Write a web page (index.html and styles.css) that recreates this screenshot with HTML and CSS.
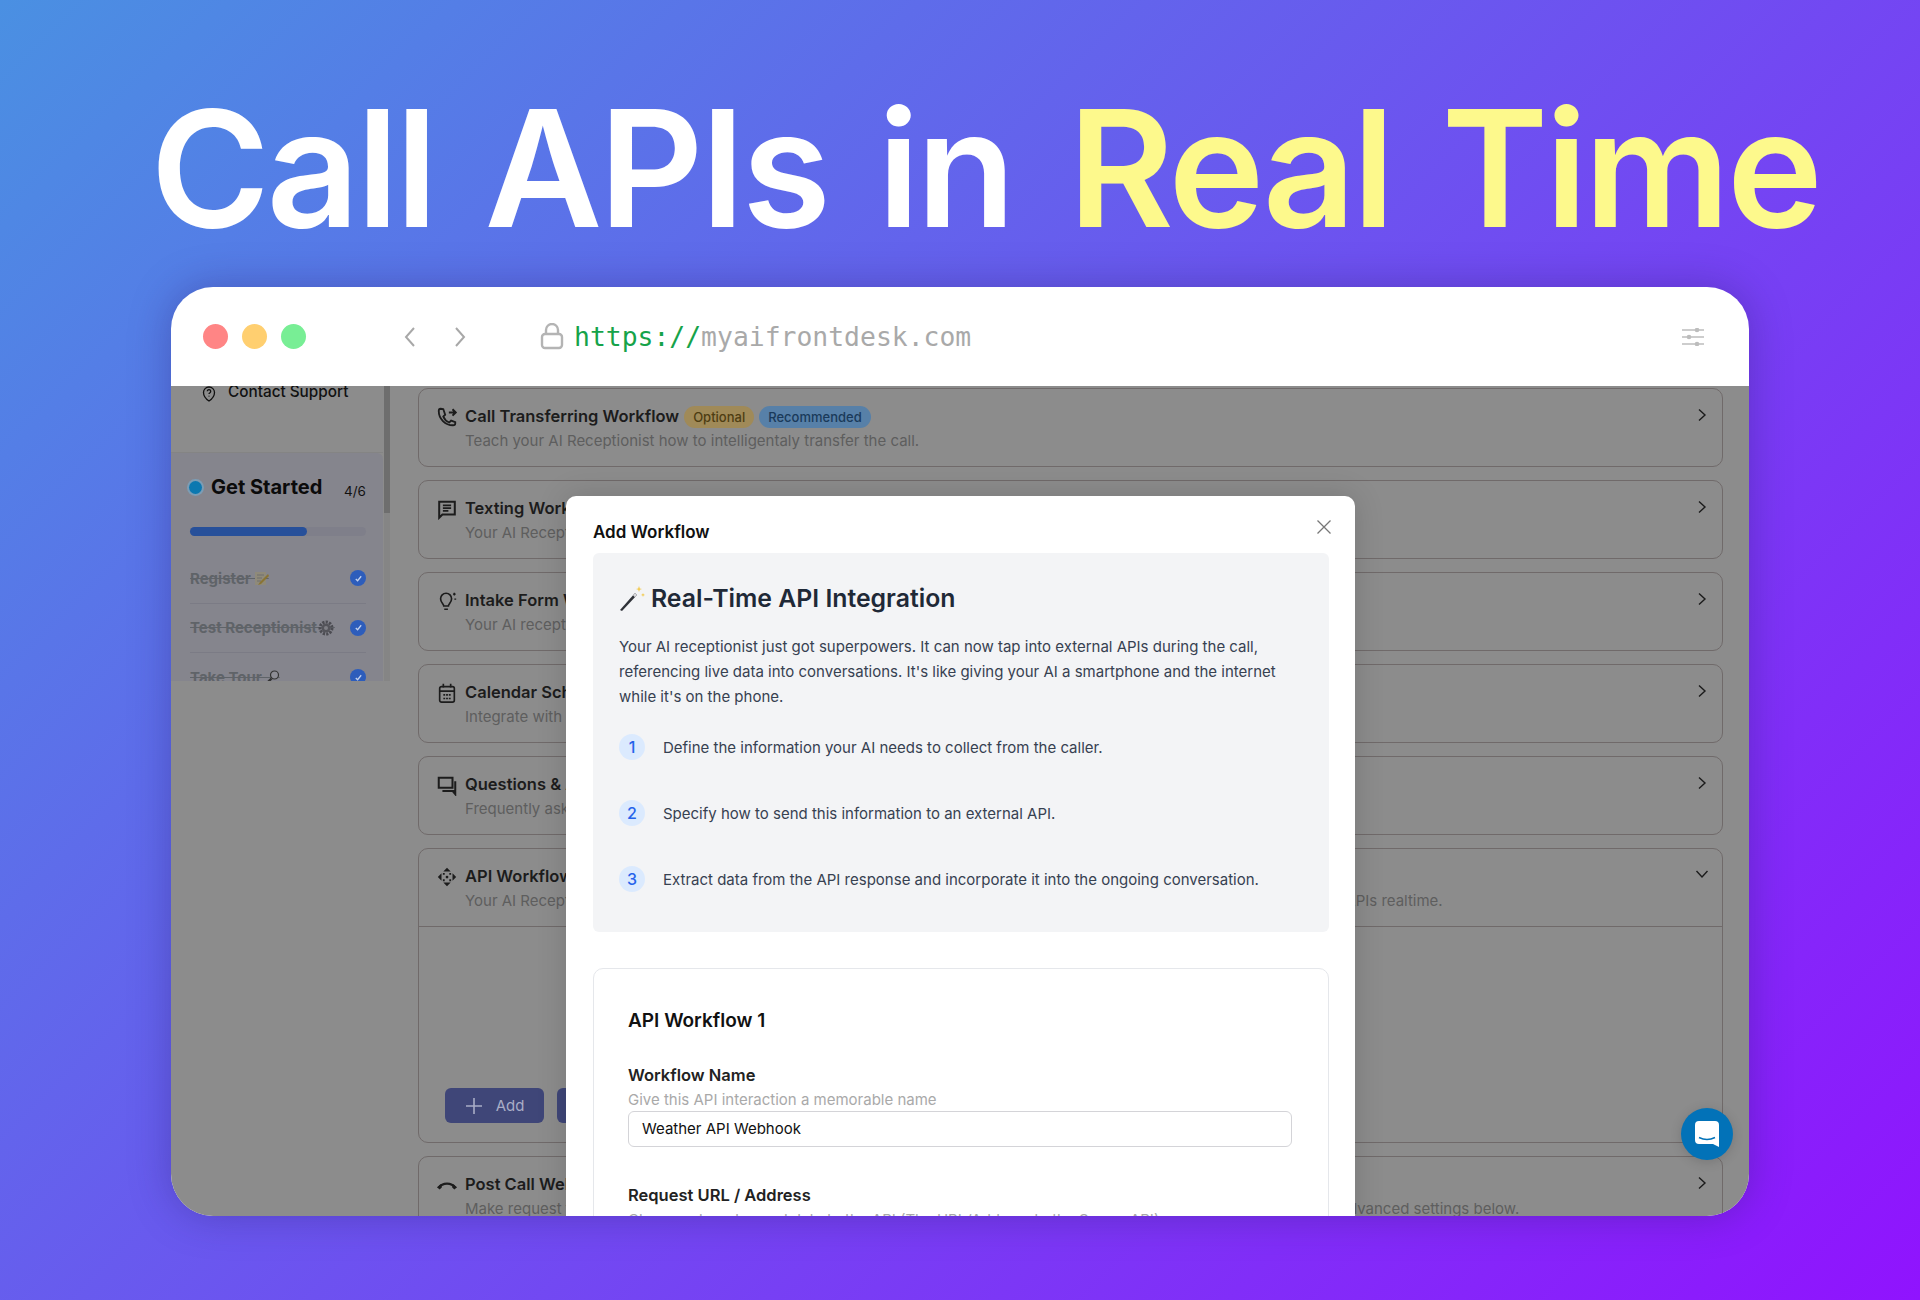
FILE: index.html
```html
<!DOCTYPE html>
<html lang="en">
<head>
    <meta charset="UTF-8">
    <meta name="viewport" content="width=device-width, initial-scale=1.0">
    <title>Call APIs in Real Time</title>
    <link rel="stylesheet" href="styles.css">
</head>
<body>
    <h1 class="hero">Call APIs in <span class="hero-accent">Real Time</span></h1>

    <div class="window">
        <div class="window-bar">
            <div class="dots">
                <span class="dot dot-red"></span>
                <span class="dot dot-yellow"></span>
                <span class="dot dot-green"></span>
            </div>
            <div class="nav-arrows">
                <svg width="14" height="22" viewBox="0 0 14 22" fill="none" stroke="#a8a8a8" stroke-width="2"><path d="M11 2 3 11l8 9"/></svg>
                <svg width="14" height="22" viewBox="0 0 14 22" fill="none" stroke="#a8a8a8" stroke-width="2"><path d="m3 2 8 9-8 9"/></svg>
            </div>
            <svg class="lock" width="24" height="27" viewBox="0 0 24 27" fill="none" stroke="#b4b4b4" stroke-width="2.400"><rect x="2" y="11" width="20" height="14" rx="3"/><path d="M6 11V7a6 6 0 0 1 12 0v4"/></svg>
            <div class="url"><span class="url-scheme">https://</span>myaifrontdesk.com</div>
            <svg class="sliders" width="22" height="18" viewBox="0 0 22 18" fill="#bdbdbd" stroke="#bdbdbd" stroke-width="1.400"><path d="M0 2h22M0 9h22M0 16h22" fill="none"/><circle cx="15" cy="2" r="1.600"/><circle cx="7" cy="9" r="1.600"/><circle cx="15" cy="16" r="1.600"/></svg>
        </div>

        <div class="app">
            <aside class="sidebar">
                <div class="sidebar-content">
                    <div class="support">
                        <svg width="14" height="16" viewBox="0 0 14 16" fill="none" stroke="#111" stroke-width="1.300"><path d="M7 15C4 13 1.500 10 1.500 6.500a5.500 5.500 0 0 1 11 0C12.500 10 10 13 7 15z"/><path d="M5.300 5.300a1.700 1.700 0 1 1 2.600 1.500c-.6.300-.9.700-.9 1.300M7 9.800v.8"/></svg>
                        Contact Support
                    </div>
                    <div class="checklist">
                        <div class="checklist-head">
                            <span class="pulse"></span>
                            <span class="checklist-title">Get Started</span>
                            <span class="checklist-count">4/6</span>
                        </div>
                        <div class="progress"><div class="progress-fill"></div></div>
                        <div class="check-item">
                            <span class="check-label">Register&nbsp;&nbsp;&nbsp;&nbsp;&nbsp;</span>
                            <svg class="mini-emoji" width="15" height="15" viewBox="0 0 15 15"><rect x="1" y="1" width="11" height="13" fill="#8f8a7a"/><path d="M3 4h7M3 7h5M3 10h4" stroke="#6f6f6f"/><path d="M14 3 6 11l-2 3 3-1 8-8z" fill="#8a7434"/></svg>
                            <span class="check"><svg width="9" height="9" viewBox="0 0 10 10" fill="none" stroke="#c4d2ee" stroke-width="1.400"><path d="m2 5.500 2 2 4-5"/></svg></span>
                        </div>
                        <div class="check-item">
                            <span class="check-label">Test Receptionist&nbsp;&nbsp;&nbsp;&nbsp;&nbsp;</span>
                            <svg class="mini-emoji mini-gear" width="16" height="16" viewBox="0 0 16 16"><circle cx="8" cy="8" r="6" fill="none" stroke="#4c4c52" stroke-width="3" stroke-dasharray="2.200 1.200"/><circle cx="8" cy="8" r="4.500" fill="#54545a"/><circle cx="8" cy="8" r="2" fill="#7f7f85"/></svg>
                            <span class="check"><svg width="9" height="9" viewBox="0 0 10 10" fill="none" stroke="#c4d2ee" stroke-width="1.400"><path d="m2 5.500 2 2 4-5"/></svg></span>
                        </div>
                        <div class="check-item">
                            <span class="check-label">Take Tour&nbsp;&nbsp;&nbsp;&nbsp;&nbsp;</span>
                            <svg class="mini-emoji" width="15" height="15" viewBox="0 0 15 15" fill="none" stroke="#333" stroke-width="1.200"><circle cx="9.500" cy="5" r="4" fill="#8d8d95"/><path d="M6.500 8.500 2 13" stroke-width="2.400"/></svg>
                            <span class="check"><svg width="9" height="9" viewBox="0 0 10 10" fill="none" stroke="#c4d2ee" stroke-width="1.400"><path d="m2 5.500 2 2 4-5"/></svg></span>
                        </div>
                    </div>
                </div>
                <div class="scrollbar"><div class="scrollbar-thumb"></div></div>
            </aside>

            <main class="workflows">
                <section class="card">
                    <div class="card-head">
                        <svg class="card-icon" width="22" height="22" viewBox="0 0 24 24" fill="none" stroke="#1c1c1c" stroke-width="2"><path d="M8 3.500 5 3C3.500 3 3 4 3 5.500 3 14 10 21 18.500 21c1.500 0 2.500-.8 2.500-2v-1.500l-4.500-1.500-2 2c-2.500-1-5.500-4-6.500-6.500l2-2z"/><path d="M14 7h7M18 3.500 21.500 7 18 10.500" stroke-width="2.200"/></svg>
                        <div class="card-text">
                            <div class="card-title">Call Transferring Workflow <span class="badge badge-optional">Optional</span> <span class="badge badge-recommended">Recommended</span></div>
                            <div class="card-desc">Teach your AI Receptionist how to intelligentaly transfer the call.</div>
                        </div>
                        <svg class="chevron" width="12" height="14" viewBox="0 0 12 14" fill="none" stroke="#1c1c1c" stroke-width="1.400"><path d="m3 1.500 6 5.500-6 5.500"/></svg>
                    </div>
                </section>
                <section class="card">
                    <div class="card-head">
                        <svg class="card-icon" width="22" height="22" viewBox="0 0 24 24" fill="none" stroke="#1c1c1c" stroke-width="2.200"><path d="M3.500 4h17v14H7l-3.500 3.500z"/><path d="M7.500 8h9M7.500 11h9M7.500 14h6" stroke-width="1.800"/></svg>
                        <div class="card-text">
                            <div class="card-title">Texting Workflow</div>
                            <div class="card-desc">Your AI Receptionist can send text messages during the call.</div>
                        </div>
                        <svg class="chevron" width="12" height="14" viewBox="0 0 12 14" fill="none" stroke="#1c1c1c" stroke-width="1.400"><path d="m3 1.500 6 5.500-6 5.500"/></svg>
                    </div>
                </section>
                <section class="card">
                    <div class="card-head">
                        <svg class="card-icon" width="22" height="22" viewBox="0 0 24 24" fill="none" stroke="#1c1c1c" stroke-width="1.800"><path d="M8.500 17.500c0-2.500-3.500-3.500-3.500-8a6 6 0 0 1 12 0c0 4.500-3.500 5.500-3.500 8zM9 21h4"/><path d="M20 3v3M18.500 4.500h3M20 10h2" stroke-width="1.500"/></svg>
                        <div class="card-text">
                            <div class="card-title">Intake Form Workflow</div>
                            <div class="card-desc">Your AI receptionist can collect information from callers.</div>
                        </div>
                        <svg class="chevron" width="12" height="14" viewBox="0 0 12 14" fill="none" stroke="#1c1c1c" stroke-width="1.400"><path d="m3 1.500 6 5.500-6 5.500"/></svg>
                    </div>
                </section>
                <section class="card">
                    <div class="card-head">
                        <svg class="card-icon" width="22" height="22" viewBox="0 0 24 24" fill="none" stroke="#1c1c1c" stroke-width="1.800"><rect x="4" y="5" width="16" height="17" rx="2"/><path d="M4 10h16M8 2v4M16 2v4"/><path d="M8 14h2M11 14h2M14 14h2M8 18h2M11 18h2M14 18h2" stroke-width="1.800"/></svg>
                        <div class="card-text">
                            <div class="card-title">Calendar Scheduling Workflow</div>
                            <div class="card-desc">Integrate with your calendar to book appointments.</div>
                        </div>
                        <svg class="chevron" width="12" height="14" viewBox="0 0 12 14" fill="none" stroke="#1c1c1c" stroke-width="1.400"><path d="m3 1.500 6 5.500-6 5.500"/></svg>
                    </div>
                </section>
                <section class="card">
                    <div class="card-head">
                        <svg class="card-icon" width="22" height="22" viewBox="0 0 24 24" fill="none" stroke="#1c1c1c" stroke-width="2.200"><path d="M3 4h15v11H3z"/><path d="M7 18.500h14V8M21 17v5l-3-3.500"/></svg>
                        <div class="card-text">
                            <div class="card-title">Questions &amp; Answers</div>
                            <div class="card-desc">Frequently asked questions your AI can answer.</div>
                        </div>
                        <svg class="chevron" width="12" height="14" viewBox="0 0 12 14" fill="none" stroke="#1c1c1c" stroke-width="1.400"><path d="m3 1.500 6 5.500-6 5.500"/></svg>
                    </div>
                </section>
                <section class="card card-open">
                    <div class="card-head card-head-open">
                        <svg class="card-icon" width="22" height="22" viewBox="0 0 24 24" fill="#1c1c1c"><path d="m12 2 4 4h-8zM12 22l-4-4h8zM2 12l4-4v8zM22 12l-4 4V8z"/><circle cx="12" cy="12" r="1.500"/><path d="M7.500 7.500h2v2h-2zM14.500 7.500h2v2h-2zM7.500 14.500h2v2h-2zM14.500 14.500h2v2h-2z"/></svg>
                        <div class="card-text">
                            <div class="card-title">API Workflows</div>
                            <div class="card-desc">Your AI Receptionist can interact with your own systems and pull information from or send information to, your own external APIs realtime.</div>
                        </div>
                        <svg class="chevron" width="14" height="12" viewBox="0 0 14 12" fill="none" stroke="#1c1c1c" stroke-width="1.400"><path d="m1.500 3 5.500 6 5.500-6"/></svg>
                    </div>
                    <div class="card-body">
                        <button class="add-btn">
                            <svg width="18" height="18" viewBox="0 0 18 18" fill="none" stroke="#a9adc6" stroke-width="1.600"><path d="M9 1v16M1 9h16"/></svg>
                            Add
                        </button>
                        <button class="add-btn"></button>
                    </div>
                </section>
                <section class="card">
                    <div class="card-head">
                        <svg class="card-icon" width="22" height="22" viewBox="0 0 24 24" fill="#1c1c1c"><path d="M3 15c4-6 14-6 18 0" fill="none" stroke="#1c1c1c" stroke-width="2.400"/><path d="M1 14.500 5.500 11l1 3.500-2.500 2.500zM23 14.500 18.500 11l-1 3.500 2.500 2.500z"/></svg>
                        <div class="card-text">
                            <div class="card-title">Post Call Webhook</div>
                            <div class="card-desc">Make request to an external endpoint after every call with the full details of the conversation and choose the data using the advanced settings below.</div>
                        </div>
                        <svg class="chevron" width="12" height="14" viewBox="0 0 12 14" fill="none" stroke="#1c1c1c" stroke-width="1.400"><path d="m3 1.500 6 5.500-6 5.500"/></svg>
                    </div>
                </section>
            </main>

            <div class="modal">
                <div class="modal-head">
                    <span class="modal-title">Add Workflow</span>
                    <svg class="modal-close" width="16" height="16" viewBox="0 0 16 16" fill="none" stroke="#777" stroke-width="1.300"><path d="m1.500 1.500 13 13M14.500 1.500l-13 13"/></svg>
                </div>
                <div class="intro">
                    <h2 class="intro-title">
                        <svg width="26" height="26" viewBox="0 0 26 26"><path d="M1 25 16 8l2 2L3 26z" fill="#2f3238"/><path d="m14 10.300 2-2.300 2 2-2.100 2.300z" fill="#d8d8dc"/><path d="m20 1 .8 2.500L23 4l-2.200.8L20 7l-.8-2.200L17 4l2.200-.5zM24 8l.5 1.300L26 10l-1.500.5L24 12l-.5-1.500L22 10l1.500-.7z" fill="#f2c94c"/></svg>
                        Real-Time API Integration
                    </h2>
                    <p class="intro-text">Your AI receptionist just got superpowers. It can now tap into external APIs during the call, referencing live data into conversations. It's like giving your AI a smartphone and the internet while it's on the phone.</p>
                    <ol class="steps">
                        <li class="step"><span class="step-num">1</span>Define the information your AI needs to collect from the caller.</li>
                        <li class="step"><span class="step-num">2</span>Specify how to send this information to an external API.</li>
                        <li class="step"><span class="step-num">3</span>Extract data from the API response and incorporate it into the ongoing conversation.</li>
                    </ol>
                </div>
                <div class="form-card">
                    <h3 class="form-title">API Workflow 1</h3>
                    <div class="field">
                        <div class="field-label">Workflow Name</div>
                        <div class="field-hint">Give this API interaction a memorable name</div>
                        <div class="field-input">Weather API Webhook</div>
                    </div>
                    <div class="field">
                        <div class="field-label">Request URL / Address</div>
                        <div class="field-hint">Choose where to send data to the API (The URL/Address to the Server API)</div>
                    </div>
                </div>
            </div>

            <div class="chat-bubble">
                <svg width="24" height="26" viewBox="0 0 24 26"><path d="M4 0h16a4 4 0 0 1 4 4v22l-6-3H4a4 4 0 0 1-4-4V4a4 4 0 0 1 4-4z" fill="#fff"/><path d="M4 16.500c5 2.500 11 2.500 16 0" fill="none" stroke="#0272b8" stroke-width="1.500"/></svg>
            </div>
        </div>
    </div>
</body>
</html>
```

FILE: styles.css
```css
* { box-sizing: border-box; }
html, body { margin: 0; height: 100%; }
body {
    height: 1300px;
    overflow: hidden;
    background: linear-gradient(135deg, #4a90e2 0%, #9013fe 100%);
    font-family: Inter, "Noto Sans", sans-serif;
    display: flex;
    flex-direction: column;
    align-items: center;
}

.hero {
    margin: 78px 0 0 50px;
    height: 209px;
    font-size: 162px;
    line-height: 180px;
    font-weight: 560;
    letter-spacing: -3.200px;
    word-spacing: 12px;
    color: #fff;
    white-space: nowrap;
}
.hero-accent { color: #fdf98c; margin-left: 6px; }

.window {
    width: 1578px;
    height: 929px;
    border-radius: 42px;
    overflow: hidden;
    background: #fff;
    box-shadow: 0 0 40px rgba(40, 30, 110, 0.35);
    display: flex;
    flex-direction: column;
}

.window-bar {
    height: 99px;
    flex: none;
    display: flex;
    align-items: center;
    padding-left: 32px;
    padding-right: 45px;
}
.dots { display: flex; gap: 14px; }
.dot { width: 25px; height: 25px; border-radius: 50%; }
.dot-red { background: #ff8585; }
.dot-yellow { background: #ffcf70; }
.dot-green { background: #78ee95; }
.nav-arrows { display: flex; gap: 36px; margin-left: 97px; }
.lock { margin-left: 73px; }
.url {
    margin-left: 10px;
    font-family: "DejaVu Sans Mono", monospace;
    font-size: 26.400px;
    color: #a9a9a9;
}
.url-scheme { color: #16a34a; }
.sliders { margin-left: auto; }

/* everything below the bar sits under the modal's dim, colours are the dimmed ones */
.app {
    position: relative;
    flex: 1;
    display: flex;
    overflow: hidden;
    min-height: 0;
    background: #8c8c8c;
}

.sidebar {
    width: 219px;
    height: 295px;
    flex: none;
    display: flex;
    overflow: hidden;
    font-size: 15px;
}
.sidebar-content { flex: 1; min-width: 0; }
.scrollbar { width: 6px; background: #858585; margin-left: 1px; }
.scrollbar-thumb { height: 127px; background: #6e6e6e; }
.support {
    height: 67px;
    display: flex;
    align-items: flex-start;
    gap: 12px;
    padding-left: 31px;
    font-size: 15.300px;
    font-weight: 500;
    line-height: 12px;
    color: #111;
    border-bottom: 1px solid #848484;
}
.checklist {
    padding: 21px 17px 0 19px;
    background: #85858d;
    border-radius: 0 6px 0 0;
    height: 100%;
}
.checklist-head { display: flex; align-items: center; height: 26px; }
.pulse {
    width: 13px;
    height: 13px;
    border-radius: 50%;
    background: #0c78b0;
    box-shadow: 0 0 0 2px #7c9db5;
    margin-left: -1px;
    margin-right: 9px;
}
.checklist-title { font-size: 20px; font-weight: 700; color: #0b0b0b; }
.checklist-count { margin-left: auto; font-size: 13.500px; padding-top: 7px; color: #111; }
.progress { height: 9px; margin-top: 27px; border-radius: 5px; background: #7f7f8a; }
.progress-fill { width: 66.500%; height: 100%; border-radius: 5px; background: #27509a; }
.progress + .check-item { margin-top: 18px; }
.check-item {
    height: 49.500px;
    display: flex;
    align-items: center;
    font-weight: 700;
    color: #5f6368;
    border-bottom: 1px solid #7b7b85;
}
.check-label { text-decoration: line-through; white-space: pre; }
.mini-emoji { margin-left: -15px; }
.mini-gear { margin-left: -17px; }
.check {
    margin-left: auto;
    width: 16px;
    height: 16px;
    border-radius: 50%;
    background: #2d5dbb;
    display: flex;
    align-items: center;
    justify-content: center;
}

.workflows {
    flex: 1;
    min-width: 0;
    padding: 2px 26px 0 28px;
    display: flex;
    flex-direction: column;
    gap: 13px;
}
.card {
    flex: none;
    border: 1px solid #706a6a;
    border-radius: 10px;
}
.card-head {
    height: 77px;
    display: flex;
    padding: 15px 14px 0 17px;
}
.card-icon { flex: none; margin-top: 2px; margin-right: 7px; }
.card-text { flex: 1; min-width: 0; }
.card-title {
    display: flex;
    align-items: center;
    gap: 5px;
    font-size: 16.500px;
    line-height: 24px;
    font-weight: 600;
    color: #1c1c1c;
}
.card-desc {
    margin-top: 1px;
    font-size: 15px;
    line-height: 24px;
    color: #5e5e5e;
    white-space: nowrap;
}
.chevron { flex: none; margin-top: 4px; }
.badge {
    height: 22px;
    line-height: 22px;
    margin-top: 2px;
    padding: 0 9px;
    border-radius: 11px;
    font-size: 13px;
    font-weight: 500;
}
.badge-optional { background: #a08a58; color: #4e3d12; }
.badge-recommended { background: #5780a8; color: #1a3a5a; }
.card-open { height: 295px; }
.card-head-open { height: 78px; border-bottom: 1px solid #706a6a; }
.card-head-open .chevron { margin-right: -1px; }
.card-body { padding: 161px 0 0 26px; display: flex; gap: 13px; }
.add-btn {
    width: 99px;
    height: 35px;
    border: none;
    border-radius: 6px;
    background: #3f4678;
    color: #a9adc6;
    font-family: inherit;
    font-size: 15px;
    display: flex;
    align-items: center;
    justify-content: center;
    gap: 13px;
}

.modal {
    position: absolute;
    left: 395px;
    top: 110px;
    width: 789px;
    height: 900px;
    background: #fff;
    border-radius: 10px 10px 0 0;
    padding: 0 26px 0 27px;
    box-shadow: 0 0 30px rgba(0, 0, 0, 0.15);
}
.modal-head {
    position: relative;
    height: 57px;
    padding-top: 24px;
}
.modal-title { display: block; font-size: 17px; line-height: 24px; font-weight: 600; color: #111; }
.modal-close { position: absolute; right: -3px; top: 23px; }

.intro {
    height: 379px;
    background: #f3f4f6;
    border-radius: 6px;
    padding: 30px 26px 0;
}
.intro-title {
    margin: 0;
    display: flex;
    align-items: center;
    gap: 6px;
    font-size: 24.800px;
    line-height: 30px;
    font-weight: 600;
    color: #1f2937;
}
.intro-text {
    margin: 21px 0 0;
    font-size: 15px;
    line-height: 25px;
    color: #374151;
}
.steps { list-style: none; margin: 5px 0 0; padding: 0; }
.step {
    height: 66px;
    display: flex;
    align-items: center;
    gap: 18px;
    font-size: 15px;
    color: #374151;
}
.step-num {
    width: 26px;
    height: 26px;
    border-radius: 50%;
    background: #dbeafe;
    color: #2563eb;
    font-size: 16px;
    font-weight: 500;
    display: flex;
    align-items: center;
    justify-content: center;
}

.form-card {
    margin-top: 36px;
    height: 400px;
    border: 1px solid #e5e7eb;
    border-radius: 10px;
    padding: 39px 36px 0 34px;
}
.form-title { margin: 0; font-size: 19px; line-height: 26px; font-weight: 600; color: #111; }
.field { margin-top: 29px; }
.field + .field { margin-top: 36px; }
.field-label { font-size: 16.500px; line-height: 24px; font-weight: 600; color: #222; }
.field-hint { font-size: 15px; line-height: 24px; color: #a9a9a9; transform: translateY(1px); }
.field-input {
    height: 36px;
    border: 1px solid #d4d4d8;
    border-radius: 6px;
    padding-left: 13px;
    font-size: 15px;
    line-height: 34px;
    color: #111;
}

.chat-bubble {
    position: absolute;
    left: 1510px;
    top: 722px;
    width: 52px;
    height: 52px;
    border-radius: 50%;
    background: #0272b8;
    box-shadow: 0 2px 12px rgba(0, 0, 0, 0.15);
    display: flex;
    align-items: center;
    justify-content: center;
}
```
